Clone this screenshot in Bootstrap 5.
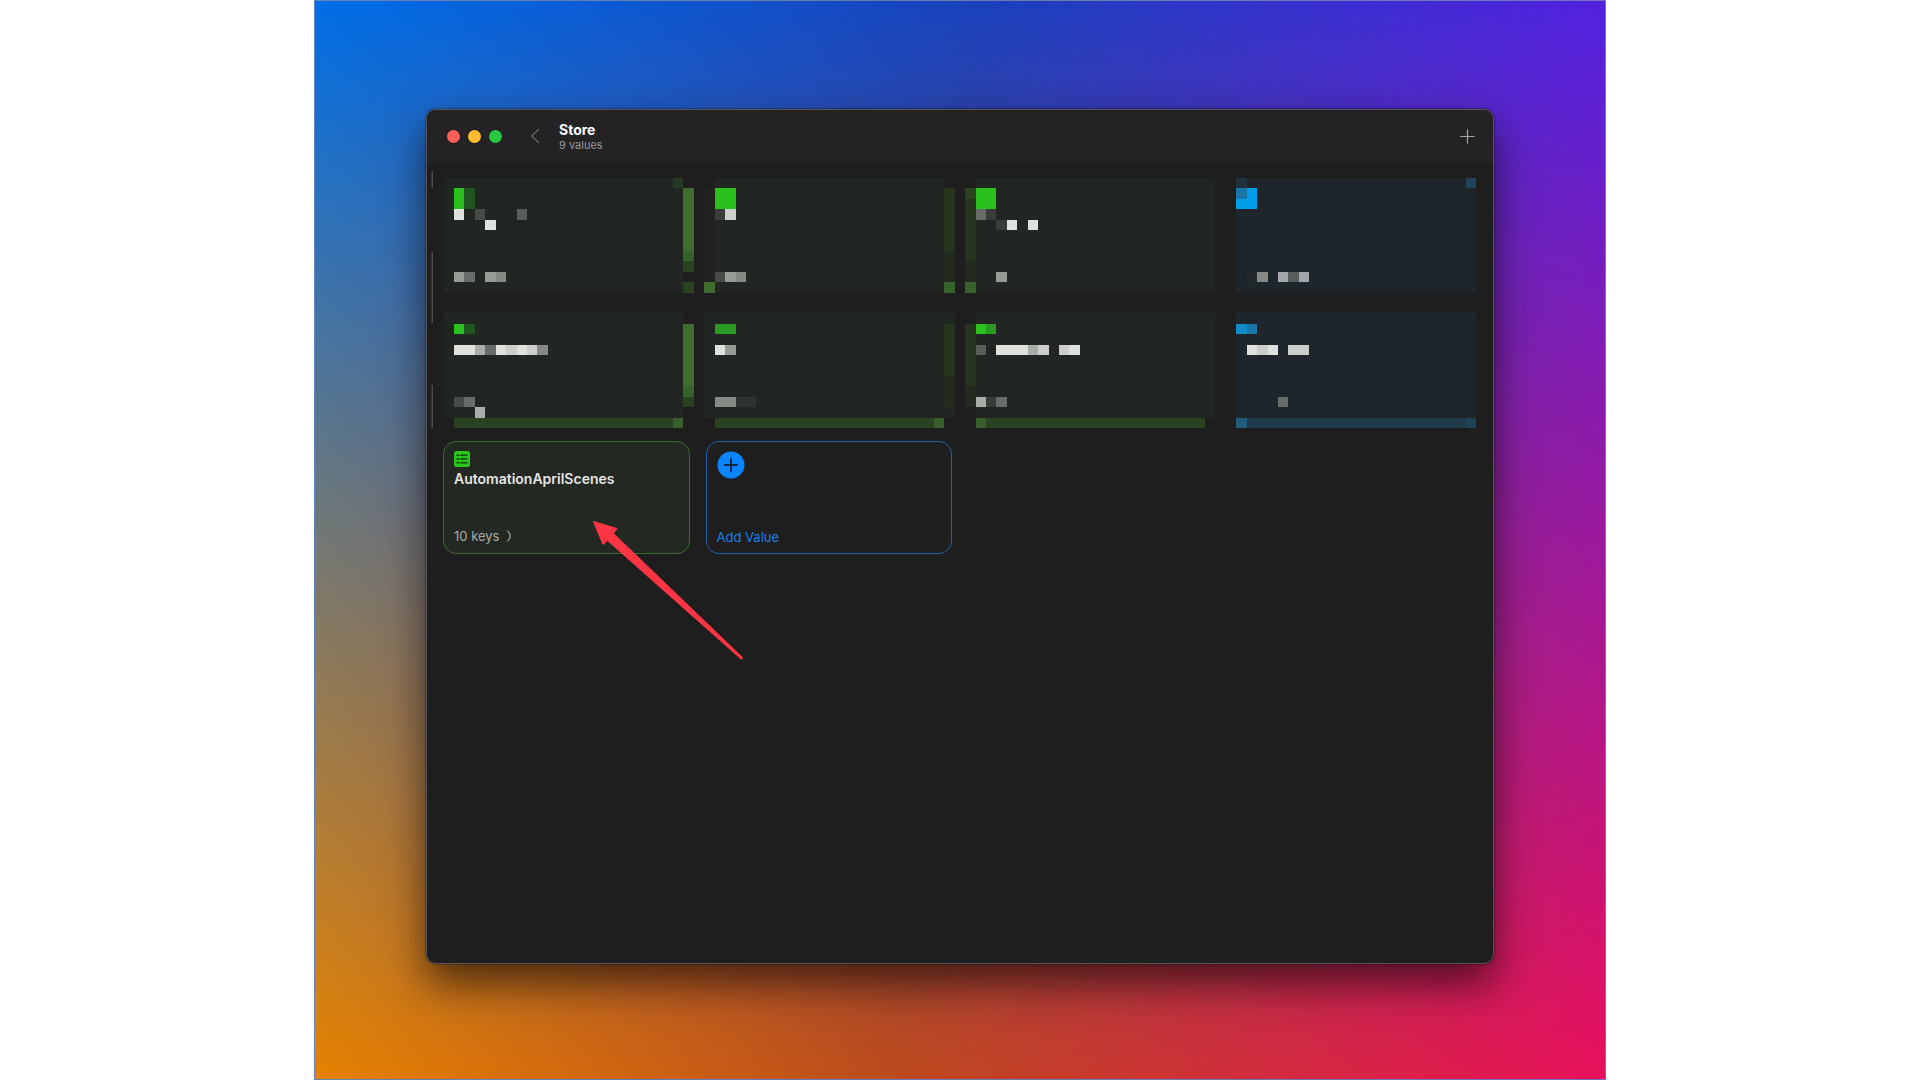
<!DOCTYPE html>
<html lang="en" data-bs-theme="dark">
<head>
<meta charset="utf-8">
<meta name="viewport" content="width=device-width, initial-scale=1">
<title>Store</title>
<link href="https://cdn.jsdelivr.net/npm/bootstrap@5.3.0/dist/css/bootstrap.min.css" rel="stylesheet">
<style>
  body { background: #fff; font-family: Inter, "Noto Sans", sans-serif; }
  .backdrop {
    max-width: 1292px;
    padding: 108px 111px 115px 111px;
    border: 1px solid rgba(130, 140, 175, .75);
    background: linear-gradient(90deg, #006fe8, #1a42bc 51%, #5222e0) border-box;
    isolation: isolate;
  }
  .backdrop::before {
    content: "";
    position: absolute;
    inset: 0;
    z-index: -1;
    background: linear-gradient(90deg, #e68200, #bd4a1c 45%, #e8105a);
    -webkit-mask-image: linear-gradient(transparent, #000);
    mask-image: linear-gradient(transparent, #000);
  }
  .app-window {
    background: #1e1e1e;
    border: 1px solid #56565a;
    border-radius: 10px;
    box-shadow: 0 0 2px rgba(0, 0, 0, .8), 0 20px 40px rgba(0, 0, 0, .6);
  }
  .title-bar { background: #242225; height: 54px; padding: 0 18px 2px 20px; border-radius: 9px 9px 0 0; }
  .light { width: 13px; height: 13px; border-radius: 50%; border: 0; padding: 0; }
  .light-close { background: #ff5f57; }
  .light-min { background: #febc2e; }
  .light-zoom { background: #28c840; }
  .lights { gap: 8px; }
  .bar-btn { background: none; border: 0; padding: 0; line-height: 0; }
  .back-btn { margin-left: 28px; }
  .title-text { margin-left: 19px; }
  .title-text h1 { font-size: 14px; line-height: 17px; font-weight: 700; color: #fff; }
  .title-text p { font-size: 11px; line-height: 14px; color: #98979a; }
  .value-grid { display: grid; grid-template-columns: repeat(4, 1fr); gap: 16px; padding: 13px 16px; }
  .value-card {
    height: 113px;
    border: 1px solid #3a6a2e;
    border-radius: 13px;
    background: #232822;
    padding: 9px 9px 8px 10px;
    font-size: 13px;
    line-height: 18px;
    color: #a9aca8;
  }
  .value-name { font-size: 14px; font-weight: 600; color: #e3e5e2; margin-top: 3px; }
  .add-card { background: #1e1e1e; border-color: #215fa8; color: #1a7fe8; line-height: 16px; }
  .pointer { position: absolute; left: 165px; top: 410px; pointer-events: none; }
</style>
</head>
<body>
<main class="backdrop position-relative mx-auto min-vh-100 d-flex flex-column">
  <section class="app-window position-relative flex-grow-1" aria-label="Store window">
    <header class="title-bar d-flex align-items-center">
      <div class="lights d-flex">
        <button class="light light-close" aria-label="Close"></button>
        <button class="light light-min" aria-label="Minimize"></button>
        <button class="light light-zoom" aria-label="Zoom"></button>
      </div>
      <button class="bar-btn back-btn" aria-label="Back">
        <svg width="10" height="16" viewBox="0 0 10 16" fill="none" stroke="#69686b" stroke-width="1.2" stroke-linecap="round" stroke-linejoin="round"><path d="M8.5 1.5 1.5 8l7 6.5"/></svg>
      </button>
      <div class="title-text">
        <h1 class="m-0">Store</h1>
        <p class="m-0">9 values</p>
      </div>
      <button class="bar-btn ms-auto" aria-label="Add">
        <svg width="15" height="15" viewBox="0 0 15 15" stroke="#a3a2a5" stroke-width="1.2" stroke-linecap="round"><path d="M7.5.8v13.4M.8 7.5h13.4"/></svg>
      </button>
    </header>

    <!-- Pixelated private values, drawn in units of one mosaic cell -->
    <svg class="d-block w-100" viewBox="-1 0 1066 264" role="img" aria-label="Eight hidden values">
      <g fill="#4a4a4a"><path d="M3.500 7h1.500v17H3.500zM3.500 88h1.500v71H3.500zM3.500 221h1.500v43H3.500z"/></g>
      <g transform="translate(26 24.3) scale(10.43)" shape-rendering="crispEdges">
        <path fill="#222622" d="M-1-1h23v11h-23zM25-1h22v11h-22zM50-1h23v11h-23zM-1 12h23v10h-23zM24 12h24v10h-24zM50 12h23v10h-23z"/>
        <path fill="#202220" d="M24 0h1v9h-1z"/>
        <path fill="#1f262b" d="M75-1h23v11h-23zM75 12h23v10h-23z"/>
        <path fill="#27351f" d="M47 0h1v6h-1zM49 1h1v6h-1zM47 13h1v5h-1zM49 13h1v6h-1z"/>
        <path fill="#232a20" d="M47 6h1v3h-1zM49 7h1v2h-1zM47 18h1v3h-1zM49 19h1v2h-1z"/>
        <path fill="#406c2f" d="M22 0h1v6h-1zM22 13h1v6h-1zM24 9h1v1h-1z"/>
        <path fill="#38622b" d="M22 6h1v1h-1zM22 19h1v1h-1zM47 9h1v1h-1zM49 9h1v1h-1z"/>
        <path fill="#294321" d="M22 7h1v1h-1zM22 9h1v1h-1zM22 20h1v1h-1zM49 0h1v1h-1z"/>
        <path fill="#263a23" d="M21-1h1v1h-1z"/>
        <path fill="#2b4222" d="M0 22h22v1h-22zM25 22h22v1h-22zM50 22h22v1h-22z"/>
        <path fill="#39602c" d="M21 22h1v1h-1zM46 22h1v1h-1zM50 22h1v1h-1z"/>
        <path fill="#2ac11e" d="M0 0h1v2h-1zM25 0h2v2h-2zM50 0h2v2h-2zM0 13h1v1h-1zM50 13h1v1h-1z"/>
        <path fill="#205420" d="M1 0h1v2h-1zM1 13h1v1h-1z"/>
        <path fill="#2b9a25" d="M25 13h2v1h-2zM51 13h1v1h-1z"/>
        <path fill="#009de8" d="M75 0h2v2h-2z"/>
        <path fill="#1b74a8" d="M75 0h1v1h-1zM76 13h1v1h-1z"/>
        <path fill="#128bc8" d="M75 13h1v1h-1z"/>
        <path fill="#1e313c" d="M75-1h1v1h-1z"/>
        <path fill="#21445a" d="M97-1h1v1h-1z"/>
        <path fill="#1f394b" d="M75 22h23v1h-23z"/>
        <path fill="#215b7e" d="M75 22h1v1h-1z"/>
        <path fill="#1e4258" d="M97 22h1v1h-1z"/>
        <path fill="#dfe1dd" d="M0 2h1v1h-1zM3 3h1v1h-1zM53 3h1v1h-1zM55 3h1v1h-1zM0 15h2v1h-2zM4 15h1v1h-1zM6 15h1v1h-1zM25 15h1v1h-1zM52 15h3v1h-3zM59 15h1v1h-1zM76 15h1v1h-1zM78 15h1v1h-1z"/>
        <path fill="#cbcecb" d="M26 2h1v1h-1zM5 15h1v1h-1zM7 15h1v1h-1zM56 15h1v1h-1zM58 15h1v1h-1zM77 15h1v1h-1zM80 15h2v1h-2z"/>
        <path fill="#aaaea9" d="M2 15h1v1h-1zM55 15h1v1h-1zM2 21h1v1h-1zM50 20h1v1h-1z"/>
        <path fill="#a3a6ab" d="M79 8h1v1h-1zM81 8h1v1h-1z"/>
        <path fill="#979b96" d="M0 8h1v1h-1zM3 8h1v1h-1zM26 8h1v1h-1zM52 8h1v1h-1zM26 15h1v1h-1z"/>
        <path fill="#868a85" d="M4 8h1v1h-1zM27 8h1v1h-1zM77 8h1v1h-1zM8 15h1v1h-1zM25 20h2v1h-2z"/>
        <path fill="#686c68" d="M1 8h1v1h-1zM50 2h1v1h-1zM3 15h1v1h-1zM1 20h1v1h-1zM52 20h1v1h-1zM79 20h1v1h-1z"/>
        <path fill="#5a5e5a" d="M6 2h1v1h-1zM80 8h1v1h-1zM50 15h1v1h-1z"/>
        <path fill="#474b47" d="M2 2h1v1h-1zM25 8h1v1h-1zM0 20h1v1h-1z"/>
        <path fill="#393d39" d="M25 2h1v1h-1zM51 2h1v1h-1zM52 3h1v1h-1zM51 20h1v1h-1z"/>
        <path fill="#2e332f" d="M27 20h2v1h-2z"/>
        <path fill="#24282b" d="M76 8h1v1h-1z"/>
      </g>
    </svg>

    <div class="value-grid">
      <button class="value-card d-flex flex-column align-items-start text-start">
        <svg width="16" height="16" viewBox="0 0 16 16"><rect width="16" height="16" rx="2.5" fill="#2ac41e"/><path d="M3 4.3h2M7 4.3h6M3 8h2M7 8h6M3 11.7h2M7 11.7h6" stroke="#12480f" stroke-width="1.5" stroke-linecap="round"/></svg>
        <span class="value-name">AutomationAprilScenes</span>
        <span class="mt-auto d-flex align-items-center gap-2">10 keys
          <svg width="4" height="12" viewBox="0 0 4 12" fill="none" stroke="#a9aca8" stroke-width="1.2" stroke-linecap="round" stroke-linejoin="round"><path d="M.8 1 3 4v4L.8 11"/></svg></span>
      </button>
      <button class="value-card add-card d-flex flex-column align-items-start text-start">
        <svg width="28" height="28" viewBox="0 0 28 28"><circle cx="14" cy="14" r="13.5" fill="#0a84ff"/><path d="M14 8v12M8 14h12" stroke="#10243c" stroke-width="1.8" stroke-linecap="round"/></svg>
        <span class="mt-auto">Add Value</span>
      </button>
    </div>

    <svg class="pointer" width="154" height="142" viewBox="0 0 154 142" aria-hidden="true"><path d="M1.5 1.5 25 8.500 21.500 13.500 150.500 137.500 Q150.500 139.500 149 139 L15.500 20.500 11 24.500Z" fill="#fc3544" stroke="#fc3544" stroke-width="1" stroke-linejoin="round"/></svg>
  </section>
</main>
<script src="https://cdn.jsdelivr.net/npm/bootstrap@5.3.0/dist/js/bootstrap.bundle.min.js"></script>
</body>
</html>
